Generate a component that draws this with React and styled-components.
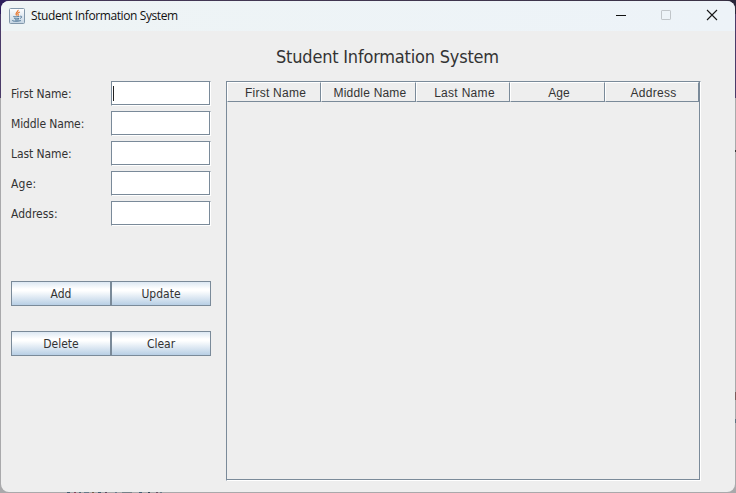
import React from "react";
import styled, { createGlobalStyle } from "styled-components";

const edge = "#7a8a99";

const GlobalStyle = createGlobalStyle`
  * { box-sizing: border-box; }
  html, body { margin: 0; padding: 0; overflow: hidden; }
`;

const Desktop = styled.div`
  position: relative;
  width: 736px;
  height: 493px;
  padding: 1px;
  background: linear-gradient(#4a3b68 0 98px, #a9a9ab 98px);
  color: #333;
  font-family: "DejaVu Sans Condensed", "DejaVu Sans", sans-serif;
  font-stretch: condensed;
  font-size: 12px;
`;

const TopEdge = styled.div`
  position: absolute;
  inset: 0 0 auto 0;
  height: 14px;
  background: linear-gradient(90deg, #2b1d5c 0 5px, #453859 12px, #3b3346 724px, #29263a 731px);
`;

const BehindMark = styled.i`
  position: absolute;
  left: ${(p) => p.$x}px;
  top: ${(p) => p.$y}px;
  width: ${(p) => p.$w}px;
  height: ${(p) => p.$h}px;
  background: ${(p) => p.$color};
`;

const Window = styled.main`
  position: relative;
  width: 734px;
  height: 491px;
  border-radius: 8px;
  overflow: hidden;
  background: #eee;
`;

const TitleBar = styled.header`
  display: flex;
  align-items: center;
  height: 30px;
  padding-left: 8px;
  background: linear-gradient(90deg, #eef4f5, #edf3f8);
`;

const Caption = styled.span`
  flex: 1;
  margin-left: 6px;
  color: #111;
  font-family: "Open Sans", "Noto Sans", sans-serif;
  font-stretch: normal;
  font-size: 12px;
  line-height: 16px;
  letter-spacing: -0.4px;
  white-space: nowrap;
`;

const Controls = styled.div`
  display: flex;
  svg { display: block; }
`;

const Body = styled.div`
  display: grid;
  grid-template-columns: 200px 475px;
  column-gap: 15px;
  padding-left: 10px;
`;

const Heading = styled.h1`
  grid-column: 1 / -1;
  height: 50px;
  margin: 0;
  padding: 14px 0 0 265px;
  font-size: 18px;
  line-height: 24px;
  font-weight: 400;
  letter-spacing: ${(p) => p.$spacing}px;
  white-space: nowrap;
`;

const Fields = styled.div`
  display: grid;
  grid-template-columns: 100px 100px;
  grid-auto-rows: 25px;
  row-gap: 5px;
`;

const Label = styled.label`
  line-height: 27px;
  letter-spacing: ${(p) => p.$spacing || 0}px;
  white-space: nowrap;
`;

const Field = styled.div`
  width: 100px;
  height: 25px;
  padding: 4px 0 0 1px;
  border: 1px solid;
  border-color: ${edge} #fff #fff ${edge};
  background: #fff;
  box-shadow: inset -1px -1px ${edge};
`;

const Caret = styled.div`
  width: 1px;
  height: 15px;
  background: #222;
`;

const Buttons = styled.div`
  display: grid;
  grid-template-columns: 100px 100px;
  grid-auto-rows: 25px;
  row-gap: 25px;
  margin-top: 55px;
`;

const Button = styled.button`
  padding: 0;
  border: 1px solid ${edge};
  border-radius: 0;
  background: linear-gradient(#dde8f3 0%, #fff 30%, #fff 38%, #b8cfe5 100%);
  color: #333;
  font: inherit;
  line-height: 22px;
  letter-spacing: ${(p) => p.$spacing || 0}px;
`;

const TableFrame = styled.section`
  height: 400px;
  border: 1px solid;
  border-color: ${edge} #fff #fff ${edge};
  box-shadow: inset -1px -1px ${edge};
`;

const TableHeader = styled.div`
  display: grid;
  grid-template-columns: 94px 95px 94px 95px 94px;
  grid-template-rows: 20px;
  height: 20px;
`;

const HeaderCell = styled.div`
  height: 20px;
  border: 1px solid;
  border-color: #fff ${edge} ${edge} #fff;
  padding-left: 3px;
  font-family: "Liberation Sans", Arial, sans-serif;
  font-size: 12px;
  line-height: 20px;
  letter-spacing: ${(p) => p.$spacing}px;
  text-align: center;
  white-space: nowrap;
`;

const JavaIcon = () => (
  <svg width="16" height="16" viewBox="0 0 16 16" fill="none">
    <defs>
      <linearGradient id="tile" x2="0" y2="1">
        <stop stopColor="#fff" />
        <stop offset="1" stopColor="#c4d5e3" />
      </linearGradient>
    </defs>
    <rect x=".5" y=".5" width="15" height="15" rx="1" fill="url(#tile)" stroke="#8298ab" />
    <path d="M9.1 1.8C9.6 3.8 5.4 4.8 7.6 7.5M10.9 4C8.4 4.8 8.3 5.6 9.1 6.4c.4.5.2.9-.5 1.4" stroke="#e8762c" strokeWidth="1.15" />
    <path d="M4.8 8.3c-1.2.5.8.8 5.6.2M5.2 10.3c1.2.6 3.2.5 5 0M11.2 8.2c2.2-.4 1.9 1.7-.2 2.2M3.7 12.2c-1.7 1 4.6 1.5 8.2.4M6 11.9c1.3.3 2.6.2 3.8-.1" stroke="#527999" strokeWidth="1" />
  </svg>
);

const WindowControls = () => (
  <Controls>
    <svg width="138" height="30" viewBox="0 0 138 30" fill="none">
      <path d="M19 14.5h10" stroke="#111" />
      <rect x="64.5" y="9.5" width="9" height="9" rx=".6" stroke="#c0c5c9" />
      <path d="M110 9l10 10M120 9l-10 10" stroke="#171717" strokeWidth="1.1" />
    </svg>
  </Controls>
);

const fields = [
  ["First Name:", -0.1],
  ["Middle Name:", -0.12],
  ["Last Name:", -0.08],
  ["Age:", 0.2],
  ["Address:", 0],
];
const columns = [
  ["First Name", 0.25],
  ["Middle Name", 0.2],
  ["Last Name", 0.3],
  ["Age", 0],
  ["Address", 0.3],
];
const actions = ["Add", "Update", "Delete", "Clear"];
const behind = [
  [67, 492, 3, 1, "#415d70"], [74, 492, 2, 1, "#82465b"], [79, 492, 2, 1, "#4e6878"],
  [84, 492, 5, 1, "#667987"], [92, 492, 2, 1, "#735c48"], [98, 492, 3, 1, "#415d70"],
  [105, 492, 2, 1, "#604b61"], [115, 492, 2, 1, "#68798b"], [122, 492, 10, 1, "#758087"],
  [139, 492, 3, 1, "#415f76"], [148, 492, 2, 1, "#344958"], [156, 492, 2, 1, "#6b5367"],
  [160, 492, 2, 1, "#667987"], [735, 150, 1, 2, "#333"], [735, 392, 1, 8, "#795d5c"],
  [735, 419, 1, 4, "#5d7381"],
];

export default function App() {
  return (
    <Desktop>
      <GlobalStyle />
      <TopEdge />
      {behind.map(([x, y, w, h, c]) => (
        <BehindMark key={`${x}-${y}`} $x={x} $y={y} $w={w} $h={h} $color={c} />
      ))}
      <Window>
        <TitleBar>
          <JavaIcon />
          <Caption>Student Information System</Caption>
          <WindowControls />
        </TitleBar>
        <Body>
          <Heading $spacing={-0.2}>Student Information System</Heading>
          <div>
            <Fields>
              {fields.map(([text, spacing], i) => (
                <React.Fragment key={text}>
                  <Label $spacing={spacing}>{text}</Label>
                  <Field>{i === 0 && <Caret />}</Field>
                </React.Fragment>
              ))}
            </Fields>
            <Buttons>
              {actions.map((text) => <Button key={text}>{text}</Button>)}
            </Buttons>
          </div>
          <TableFrame>
            <TableHeader>
              {columns.map(([text, spacing]) => (
                <HeaderCell key={text} $spacing={spacing}>{text}</HeaderCell>
              ))}
            </TableHeader>
          </TableFrame>
        </Body>
      </Window>
    </Desktop>
  );
}
